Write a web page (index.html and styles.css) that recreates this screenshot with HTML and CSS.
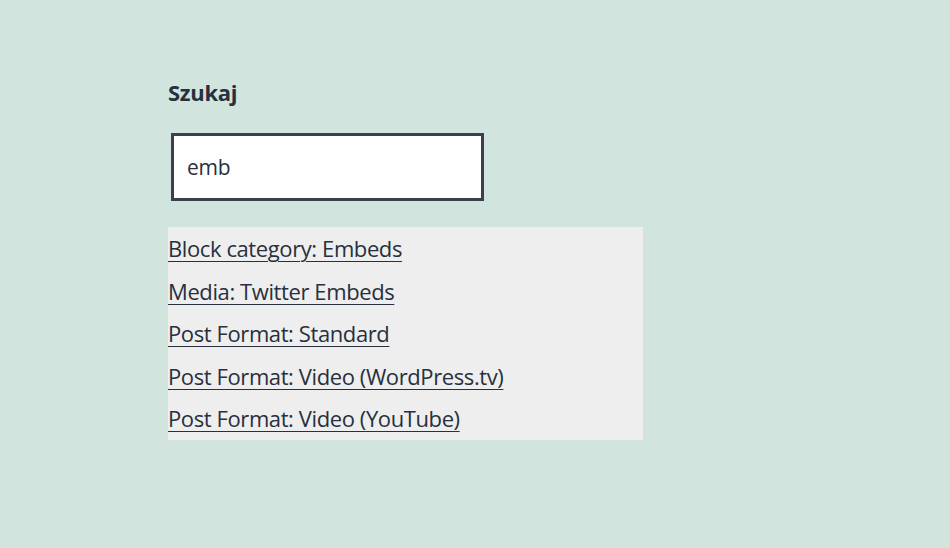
FILE: index.html
```html
<!DOCTYPE html>
<html lang="pl">
<head>
<meta charset="utf-8">
<title>Szukaj</title>
<link rel="stylesheet" href="styles.css">
</head>
<body>
<main class="page">
  <section class="search">
    <h2 class="search-title">Szukaj</h2>
    <div class="search-field"><span class="search-value">emb</span></div>
    <ul class="results">
      <li><a href="#">Block category: Embeds</a></li>
      <li><a href="#">Media: Twitter Embeds</a></li>
      <li><a href="#">Post Format: Standard</a></li>
      <li><a href="#">Post Format: Video (WordPress.tv)</a></li>
      <li><a href="#">Post Format: Video (YouTube)</a></li>
    </ul>
  </section>
</main>
</body>
</html>
```
FILE: styles.css
```css
html, body {
  margin: 0;
  padding: 0;
  background: #d1e4dd;
  color: #28303d;
  font-family: "Open Sans", "Noto Sans", sans-serif;
}
.page {
  padding: 76px 0 0 168px;
}
.search {
  width: 475px;
}
.search-title {
  margin: 0;
  font-size: 22px;
  font-weight: 700;
  line-height: 32px;
  letter-spacing: -0.3px;
}
.search-field {
  margin: 25px 0 0 3px;
  width: 294px;
  height: 62px;
  border: 3px solid #39414d;
  background: #fff;
  display: flex;
  align-items: center;
  padding-left: 13px;
}
.search-value {
  font-size: 21px;
  letter-spacing: -0.3px;
}
.results {
  list-style: none;
  margin: 26px 0 0 0;
  padding: 0;
  background: #eeeeee;
}
.results li {
  line-height: 42.6px;
  height: 42.6px;
}
.results a {
  color: #28303d;
  font-size: 22px;
  letter-spacing: -0.4px;
  text-decoration: underline;
  text-decoration-thickness: 1px;
  text-underline-offset: 4px;
}
```
